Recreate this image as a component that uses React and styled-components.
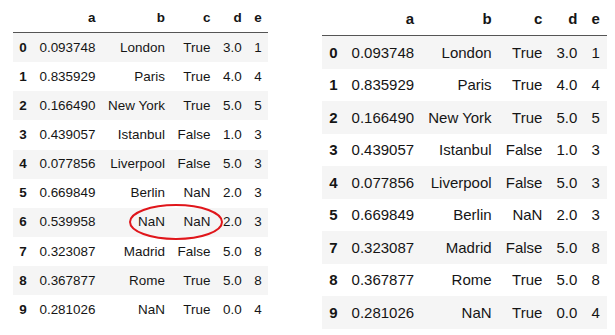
import React from "react";
import styled, { createGlobalStyle } from "styled-components";

const GlobalStyle = createGlobalStyle`
  html, body {
    margin: 0;
    padding: 0;
    background: #fff;
  }
  body {
    font-family: "Liberation Sans", Arial, sans-serif;
  }
`;

const columns = ["a", "b", "c", "d", "e"];

const rows = [
  ["0", "0.093748", "London", "True", "3.0", "1"],
  ["1", "0.835929", "Paris", "True", "4.0", "4"],
  ["2", "0.166490", "New York", "True", "5.0", "5"],
  ["3", "0.439057", "Istanbul", "False", "1.0", "3"],
  ["4", "0.077856", "Liverpool", "False", "5.0", "3"],
  ["5", "0.669849", "Berlin", "NaN", "2.0", "3"],
  ["6", "0.539958", "NaN", "NaN", "2.0", "3"],
  ["7", "0.323087", "Madrid", "False", "5.0", "8"],
  ["8", "0.367877", "Rome", "True", "5.0", "8"],
  ["9", "0.281026", "NaN", "True", "0.0", "4"],
];

const Page = styled.div`
  display: flex;
  align-items: flex-start;
  gap: 54px;
  padding: 3px 0 0 13px;
`;

const Frame = styled.div`
  position: relative;
  margin-top: ${(p) => p.$offset || 0}px;
`;

const Table = styled.table`
  border-collapse: collapse;
  border-spacing: 0;
  border: none;
  color: #151515;
  font-size: ${(p) => p.$size}px;

  thead {
    border-bottom: 1px solid #555;
    vertical-align: bottom;
  }

  th,
  td {
    text-align: right;
    vertical-align: middle;
    padding: 0.5em 0.47em;
    line-height: 1.1667;
    white-space: nowrap;
    border: none;
  }

  th {
    font-weight: bold;
  }

  tbody tr:nth-child(odd) {
    background: #f5f5f5;
  }
`;

const Ring = styled.svg`
  position: absolute;
  left: 116px;
  top: 201px;
  width: 94px;
  height: 36px;
  overflow: visible;
`;

const DataTable = ({ data, size }) => (
  <Table $size={size}>
    <thead>
      <tr>
        <th></th>
        {columns.map((c) => (
          <th key={c}>{c}</th>
        ))}
      </tr>
    </thead>
    <tbody>
      {data.map((r) => (
        <tr key={r[0]}>
          <th>{r[0]}</th>
          {r.slice(1).map((v, i) => (
            <td key={i}>{v}</td>
          ))}
        </tr>
      ))}
    </tbody>
  </Table>
);

export default function App() {
  return (
    <>
      <GlobalStyle />
      <Page>
        <Frame>
          <DataTable data={rows} size={13.44} />
          <Ring viewBox="0 0 94 36">
            <ellipse cx="47" cy="18" rx="46" ry="17" fill="none" stroke="#e0161b" strokeWidth="2" />
          </Ring>
        </Frame>
        <Frame $offset={-0.5}>
          <DataTable data={rows.filter((r) => r[0] !== "6")} size={15} />
        </Frame>
      </Page>
    </>
  );
}
